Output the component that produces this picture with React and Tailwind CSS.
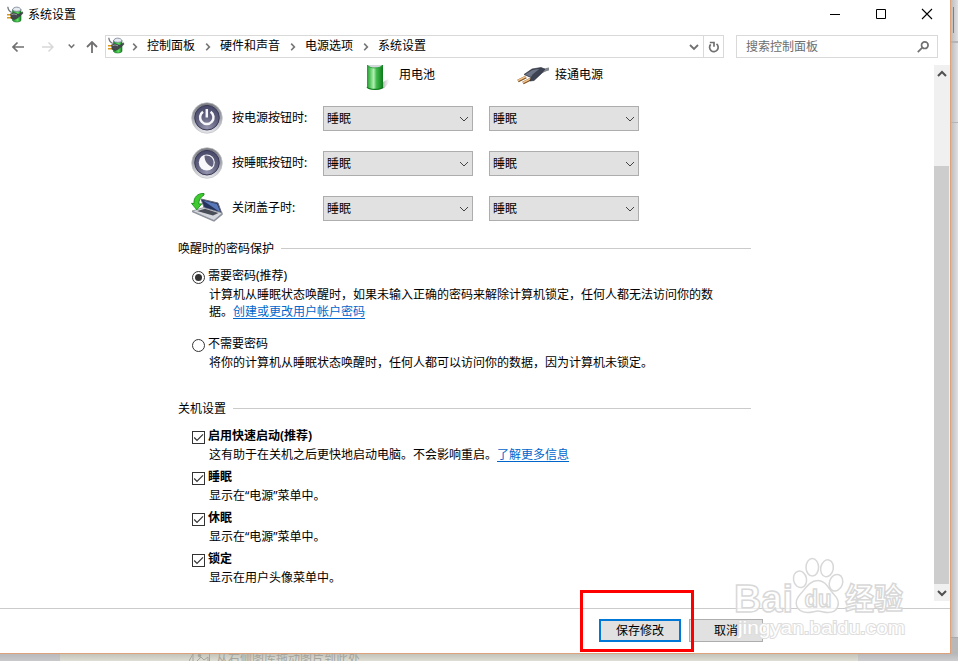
import React from 'react';

function Chevron({ dir = 'down', className = '' }) {
  const d = { down: 'M1 3l4 4 4-4', up: 'M1 7l4-4 4 4', right: 'M3.2 1.6l3.2 3.3-3.2 3.3' }[dir];
  return (
    <svg viewBox="0 0 10 10" className={`h-[10px] w-[10px] shrink-0 ${className}`} fill="none" stroke="currentColor">
      <path d={d} />
    </svg>
  );
}

function PowerPlanIcon({ id }) {
  return (
    <svg viewBox="0 0 17 17" className="h-[17px] w-[17px] shrink-0">
      <defs>
        <linearGradient id={id} x1="0" x2="1">
          <stop offset="0" stopColor="#178a26" />
          <stop offset=".6" stopColor="#5ee063" />
          <stop offset="1" stopColor="#128020" />
        </linearGradient>
      </defs>
      <path d="M5.500 3.500v11c1.500 2 7 2 8.500 0v-11z" fill={`url(#${id})`} stroke="#1c6b2a" strokeWidth=".6" />
      <path d="M5.500 4C6 .2 13.500 .2 14 4c-1 1.800-7.500 1.800-8.500 0z" fill="#e6ebf2" stroke="#7f8899" strokeWidth=".9" />
      <path d="M.8.800c.3 3 1.200 4.600 4 5.700" fill="none" stroke="#70757c" strokeWidth="1.300" />
      <path d="M0 8.800h4M0 11.800h4" stroke="#d99a12" strokeWidth="1.600" />
      <path d="M3.500 7.800l3.500-1 3 1 2 .5 3.500-2.500.5 1.500-3 2.700-1.500 1-1 1.200-3 1.300-3.500-1z" fill="#44484d" stroke="#25282c" strokeWidth=".4" />
      <path d="M4.500 8.600l2.500-.7 3 .9" stroke="#989da3" fill="none" />
    </svg>
  );
}

function BatteryIcon() {
  return (
    <svg viewBox="0 0 28 26" className="h-[26px] w-[28px] shrink-0">
      <defs>
        <linearGradient id="cell" x1="0" x2="1">
          <stop offset="0" stopColor="#1d9a2c" />
          <stop offset=".2" stopColor="#5cc866" />
          <stop offset=".42" stopColor="#b4f0b4" />
          <stop offset=".58" stopColor="#45bd50" />
          <stop offset="1" stopColor="#0b7a1a" />
        </linearGradient>
        <linearGradient id="cellShadow" x1="0" x2="1">
          <stop offset="0" stopColor="#777" stopOpacity=".8" />
          <stop offset="1" stopColor="#bbb" stopOpacity="0" />
        </linearGradient>
      </defs>
      <path d="M15 24l2-7 5-3 1.500 3-5 6z" fill="url(#cellShadow)" />
      <path d="M1 0v22.500c2 3.300 14 3.300 16 0V0z" fill="url(#cell)" />
      <path d="M1 22c2 3.200 14 3.200 16 0" fill="none" stroke="#0d7a1b" strokeWidth="1.200" />
      <path d="M2 0h14c-1 2-4 2.500-7 2.500S3 2 2 0z" fill="#d3d8dc" />
      <path d="M1 .5c2 3.300 14 3.300 16 0" fill="none" stroke="#2f9a3c" strokeWidth=".8" />
    </svg>
  );
}

function PlugIcon() {
  return (
    <svg viewBox="0 0 33 18" className="h-[18px] w-[33px] shrink-0">
      <path d="M22 5c4 1 5-3 10-3" fill="none" stroke="#83878f" strokeWidth="3" />
      <path d="M1 14l8-4M6 16l8-4" stroke="#7d4c1c" strokeWidth="3" />
      <path d="M1 13.500l8-4M6 15.500l8-4" stroke="#f0c28a" strokeWidth="1.500" />
      <path d="M7 7.500L15 2l9-1.500 4 1.500-4 5-7 6.500-4 .5 1-3.500z" fill="#3d4353" stroke="#262a36" strokeWidth=".6" />
      <path d="M8 7.500L15.500 3l7-1.300-7 5.800-1.500 2.500z" fill="#6d7485" />
    </svg>
  );
}

function RoundIcon({ kind }) {
  return (
    <svg viewBox="0 0 32 32" className="h-8 w-8 shrink-0">
      <defs>
        <linearGradient id={`${kind}-rim`} x1="0" y1="0" x2="0" y2="1">
          <stop offset="0" stopColor="#77797f" />
          <stop offset=".5" stopColor="#a3a5ac" />
          <stop offset="1" stopColor="#e8e8ec" />
        </linearGradient>
        <radialGradient id={`${kind}-face`} cx=".5" cy=".9" r=".9">
          <stop offset="0" stopColor="#9494ae" />
          <stop offset=".5" stopColor="#62627f" />
          <stop offset="1" stopColor="#48486a" />
        </radialGradient>
      </defs>
      <circle cx="16" cy="16" r="15.300" fill={`url(#${kind}-rim)`} stroke="#bcbec4" strokeWidth=".7" />
      <circle cx="16" cy="15.700" r="12.300" fill={`url(#${kind}-face)`} stroke="#3a3a58" />
      {kind === 'power' ? (
        <g fill="none" stroke="#f7f7fb">
          <path d="M12 9.800a6.700 6.700 0 1 0 7.600 0" strokeWidth="2.500" />
          <path d="M15.800 7v8.500" strokeWidth="2.500" />
        </g>
      ) : (
        <g>
          <circle cx="15.800" cy="15.500" r="8" fill="#f7f7fb" />
          <path d="M13.500 8.700c4.500-1.400 9.300 2.200 9.100 7-.1 2-.7 3.600-1.700 4.300-4.800-2.500-7.400-6-7.400-11.300z" fill="#62627f" />
        </g>
      )}
    </svg>
  );
}

function LidIcon() {
  return (
    <svg viewBox="0 0 32 30" className="h-[30px] w-8 shrink-0">
      <path d="M10 6l17 4 4 11-17-4z" fill="#24315c" stroke="#667" />
      <path d="M12 7.500l14 3.500 3.500 8.500z" fill="#5877b8" />
      <path d="M1 18l12-3.500L31.500 20 23 27.500z" fill="#d5d7de" stroke="#7e818c" strokeWidth=".7" />
      <path d="M6 18l8-2.300L27.500 20 22 22.500z" fill="#4a4e59" />
      <path d="M1 18.500L23 28l8.500-7" fill="none" stroke="#8c909a" strokeWidth="1.300" />
      <path d="M13 .5C7 0 2.500 4 3 10.500L.5 10.300 5.800 16.800l5-6-3 .2C7.800 7 9.500 4 13 2z" fill="#3fcb30" stroke="#168c18" strokeWidth=".9" />
    </svg>
  );
}

function Dropdown() {
  return (
    <button className="flex h-[25px] w-[150px] items-center justify-between border border-[#adadad] bg-[#e1e1e1] pl-[3px] pr-[3px]">
      <span>睡眠</span>
      <Chevron className="text-[#444]" />
    </button>
  );
}

function ActionRow({ icon, label }) {
  return (
    <div className="flex h-[45px] items-center pl-[191px]">
      <div className="flex h-8 w-[41px] -translate-y-px items-center">{icon}</div>
      <span className="w-[91px] -translate-y-px">{label}</span>
      <div className="flex gap-4">
        <Dropdown />
        <Dropdown />
      </div>
    </div>
  );
}

function SectionTitle({ children }) {
  return (
    <div className="ml-[178px] flex h-4 w-[573px] items-center gap-[7px]">
      <span className="pt-[2px]">{children}</span>
      <div className="h-px flex-1 bg-[#cbcbcb]" />
    </div>
  );
}

function Radio({ checked, children }) {
  return (
    <label className="ml-[192px] flex h-4 items-center gap-[3px]">
      <span className="mt-[3px] flex h-[13px] w-[13px] items-center justify-center rounded-full border border-[#333]">
        {checked && <span className="h-[7px] w-[7px] rounded-full bg-[#333]" />}
      </span>
      <span>{children}</span>
    </label>
  );
}

function Check({ title, children }) {
  return (
    <div className="h-[41px]">
      <label className="ml-[192px] flex h-4 items-center gap-[3px] font-bold">
        <span className="mt-[3px] h-[13px] w-[13px] border border-[#333]">
          <svg viewBox="0 0 11 11" className="h-[11px] w-[11px]" fill="none" stroke="#333" strokeWidth="1.200">
            <path d="M1.200 5.500l2.800 2.800L10 2.300" />
          </svg>
        </span>
        <span>{title}</span>
      </label>
      <p className="ml-[209px] mt-[3px] h-4">{children}</p>
    </div>
  );
}

function Link({ children }) {
  return <a className="text-[#0066cc] underline underline-offset-2">{children}</a>;
}

function TitleBar() {
  return (
    <div className="flex h-[30px] shrink-0 items-center pl-[7px]">
      <div className="-mt-[2px]"><PowerPlanIcon id="planTitle" /></div>
      <span className="ml-1">系统设置</span>
      <div className="ml-auto mr-[17px] flex items-center gap-[34px] pb-[2px]">
        <svg className="h-3 w-3" viewBox="0 0 12 12"><path d="M1 6.500h10" stroke="#000" /></svg>
        <svg className="h-3 w-3" viewBox="0 0 12 12"><path d="M1.500 1.500h9v9h-9z" fill="none" stroke="#000" /></svg>
        <svg className="h-3 w-3" viewBox="0 0 12 12"><path d="M1 1l10 10M11 1L1 11" stroke="#000" strokeWidth="1.100" /></svg>
      </div>
    </div>
  );
}

function AddressBar() {
  const crumbs = ['控制面板', '硬件和声音', '电源选项', '系统设置'];
  return (
    <div className="flex h-[35px] shrink-0 items-start pt-[5px]">
      <div className="flex h-[23px] w-[105px] items-center pl-3 text-[#707070]">
        <svg className="h-3 w-3" viewBox="0 0 12 12" fill="none" stroke="currentColor" strokeWidth="1.700"><path d="M12 6H1M5.500 1.500L1 6l4.500 4.500" /></svg>
        <svg className="ml-[18px] h-3 w-3 text-[#d8d8d8]" viewBox="0 0 12 12" fill="none" stroke="currentColor" strokeWidth="1.500"><path d="M0 6h11M6.500 1.500L11 6l-4.500 4.500" /></svg>
        <svg className="ml-[14px] h-[7px] w-[7px]" viewBox="0 0 7 7" fill="none" stroke="currentColor" strokeWidth="1.500"><path d="M.7 1.500l2.800 3 2.800-3" /></svg>
        <svg className="ml-[11px] h-3 w-3" viewBox="0 0 12 12" fill="none" stroke="currentColor" strokeWidth="1.800"><path d="M6 12V1M1 6l5-5 5 5" /></svg>
      </div>
      <div className="flex h-[23px] w-[619px] items-center border border-[#d9d9d9]">
        <div className="-mr-[2px] ml-[2px] -mt-[2px] shrink-0"><PowerPlanIcon id="planAddress" /></div>
        {crumbs.map((c, i) => (
          <div key={c} className="flex shrink-0 items-center">
            <Chevron dir="right" className={`mr-[7px] stroke-[1.600px] text-[#777] ${i === 0 ? 'ml-[7px]' : 'ml-[8px]'}`} />
            <span className="-mt-px">{c}</span>
          </div>
        ))}
        <Chevron className="ml-auto mr-1 stroke-[1.800px] text-[#707070]" />
        <div className="flex h-full w-[20px] items-center justify-center border-l border-[#d9d9d9]">
          <svg className="h-3 w-3" viewBox="0 0 12 12" fill="none" stroke="#707070" strokeWidth="1.700">
            <path d="M8.500 2.900a4.300 4.300 0 1 1-5.800.5" />
            <path d="M1.800 1.500h4.200v4.200" />
          </svg>
        </div>
      </div>
      <div className="ml-3 flex h-[23px] w-[202px] items-center justify-between border border-[#d9d9d9] pl-[9px] pr-2 text-[#6d6d6d]">
        <span>搜索控制面板</span>
        <svg className="h-3 w-3" viewBox="0 0 12 12" fill="none" stroke="#707070" strokeWidth="1.700">
          <circle cx="7.800" cy="4.200" r="3.300" />
          <path d="M5.300 6.700L.8 11.200" />
        </svg>
      </div>
    </div>
  );
}

function ScrollBar() {
  return (
    <div className="flex h-[536px] w-4 shrink-0 flex-col bg-[#f0f0f0]">
      <div className="flex h-[17px] items-center pl-[3px] text-[#505050]"><Chevron dir="up" className="h-[9px] w-[9px] stroke-2" /></div>
      <div className="mt-[84px] h-[418px] w-[15px] bg-[#cdcdcd]" />
      <div className="flex flex-1 items-center pl-[3px] text-[#505050]"><Chevron className="h-[9px] w-[9px] stroke-2" /></div>
    </div>
  );
}

function Watermark() {
  return (
    <svg viewBox="0 0 180 90" className="pointer-events-none absolute left-[730px] top-[555px] h-[90px] w-[180px]">
      <g fill="#fff" fillOpacity=".7" stroke="#d8d8d8" strokeWidth="1.500">
        <ellipse cx="70" cy="24.300" rx="6.500" ry="8.300" transform="rotate(-12 70 24.300)" />
        <ellipse cx="82.300" cy="12.300" rx="6.300" ry="8.800" />
        <ellipse cx="97" cy="13.300" rx="6.300" ry="8.500" transform="rotate(12 97 13.300)" />
        <ellipse cx="106" cy="27.700" rx="6.500" ry="8.500" transform="rotate(20 106 27.700)" />
        <path d="M88 25.500c8 0 11 9 16 14 8 8 4 18-6 18-4 0-7-1.500-10-1.500s-7 1.800-11 1.500c-11-.5-14-10-7-18 5-5 9-14 18-14z" />
        <g className="font-['Liberation_Sans','Noto_Sans_CJK_SC',sans-serif]">
          <text x="4" y="57" fontSize="39" fontWeight="700" textLength="59" lengthAdjust="spacingAndGlyphs">Bai</text>
          <text x="74.500" y="52" fontSize="23" fontWeight="700" textLength="27" lengthAdjust="spacingAndGlyphs">du</text>
          <text x="115" y="53.500" fontSize="30" fontWeight="700" textLength="58" lengthAdjust="spacingAndGlyphs">经验</text>
        </g>
        <text x="8" y="79" fontSize="18.500" strokeWidth="2" fillOpacity="1" stroke="#dedede" textLength="167" lengthAdjust="spacingAndGlyphs" className="font-['Liberation_Sans',sans-serif] [paint-order:stroke]">jingyan.baidu.com</text>
      </g>
    </svg>
  );
}

export default function App() {
  return (
    <div className="relative h-[661px] w-[958px] overflow-hidden bg-[#d8d8d2] font-['Noto_Sans','Noto_Sans_CJK_SC',sans-serif] text-[12px] leading-4 text-black">
      <div className="flex h-[654px]">
        <div className="flex h-[654px] w-[951px] shrink-0 flex-col border-b border-r border-[#dba27c] bg-white">
          <TitleBar />
          <AddressBar />
          <div className="flex h-[543px] shrink-0">
            <main className="flex-1">
              <div className="flex h-[31px] items-start">
                <div className="ml-[366px] w-[33px]"><BatteryIcon /></div>
                <span className="mt-[2px] w-[118px]">用电池</span>
                <div className="mt-[2px] w-[38px]"><PlugIcon /></div>
                <span className="mt-[2px]">接通电源</span>
              </div>
              <ActionRow icon={<RoundIcon kind="power" />} label="按电源按钮时:" />
              <ActionRow icon={<RoundIcon kind="sleep" />} label="按睡眠按钮时:" />
              <ActionRow icon={<LidIcon />} label="关闭盖子时:" />
              <div className="mt-[9px]"><SectionTitle>唤醒时的密码保护</SectionTitle></div>
              <div className="mt-[12px]"><Radio checked>需要密码(推荐)</Radio></div>
              <p className="ml-[209px] mt-[2px] whitespace-nowrap leading-[17px]">
                计算机从睡眠状态唤醒时，如果未输入正确的密码来解除计算机锁定，任何人都无法访问你的数
                <br />
                据。<Link>创建或更改用户帐户密码</Link>
              </p>
              <div className="mt-4"><Radio>不需要密码</Radio></div>
              <p className="ml-[209px] mt-[3px] whitespace-nowrap">将你的计算机从睡眠状态唤醒时，任何人都可以访问你的数据，因为计算机未锁定。</p>
              <div className="mt-[29px]"><SectionTitle>关机设置</SectionTitle></div>
              <div className="mt-[12px]">
                <Check title="启用快速启动(推荐)">
                  这有助于在关机之后更快地启动电脑。不会影响重启。<Link>了解更多信息</Link>
                </Check>
                <Check title="睡眠">显示在“电源”菜单中。</Check>
                <Check title="休眠">显示在“电源”菜单中。</Check>
                <Check title="锁定">显示在用户头像菜单中。</Check>
              </div>
            </main>
            <ScrollBar />
          </div>
          <div className="flex flex-1 items-start gap-2 border-t border-[#cbcbcb] pl-[599px] pt-[10px]">
            <button className="h-[23px] w-[82px] border-2 border-[#0078d7] bg-[#e1e1e1]">保存修改</button>
            <button className="h-[23px] w-[74px] border border-[#adadad] bg-[#e1e1e1]">取消</button>
          </div>
        </div>
        <div className="flex flex-1 flex-col bg-linear-to-r from-[#bdbdbd] to-[#e0e0e0]">
          <div className="h-[43px] border-b-2 border-[#b5b5b5] pl-[2px] pt-[7px]"><div className="h-[26px] w-px bg-[#808080]" /></div>
          <div className="h-[80px] border-b border-[#b5b5b5]" />
          <div className="h-[514px]" />
          <div className="flex-1 border-t border-[#aaa] bg-[#b8b8b8]" />
        </div>
      </div>
      <div className="flex h-[7px] overflow-hidden text-[#a3a49e]">
        <div className="w-[60px] bg-linear-to-b from-[#b9b9bb] to-[#c9c9cb]" />
        <div className="flex flex-1 items-start bg-linear-to-b from-[#c3c3ba] to-[#deded5] pl-[129px]">
          <svg viewBox="0 0 22 7" className="h-[7px] w-[22px] shrink-0" fill="none" stroke="currentColor">
            <path d="M4 0L0 7M4 0v7M20.500 0v7M8 7l4-4 3 3 4-3v4" />
            <circle cx="10.500" cy="1.500" r="1.300" fill="currentColor" />
          </svg>
          <span className="ml-[5px] -mt-[3px] whitespace-nowrap">从右侧图库拖动图片到此处</span>
        </div>
        <div className="w-[100px] bg-linear-to-b from-[#b9b9bb] to-[#cdcdcf]" />
      </div>
      <Watermark />
      <div className="absolute left-[580px] top-[590px] h-[62px] w-[114px] border-[3px] border-[#ff0000]" />
    </div>
  );
}
